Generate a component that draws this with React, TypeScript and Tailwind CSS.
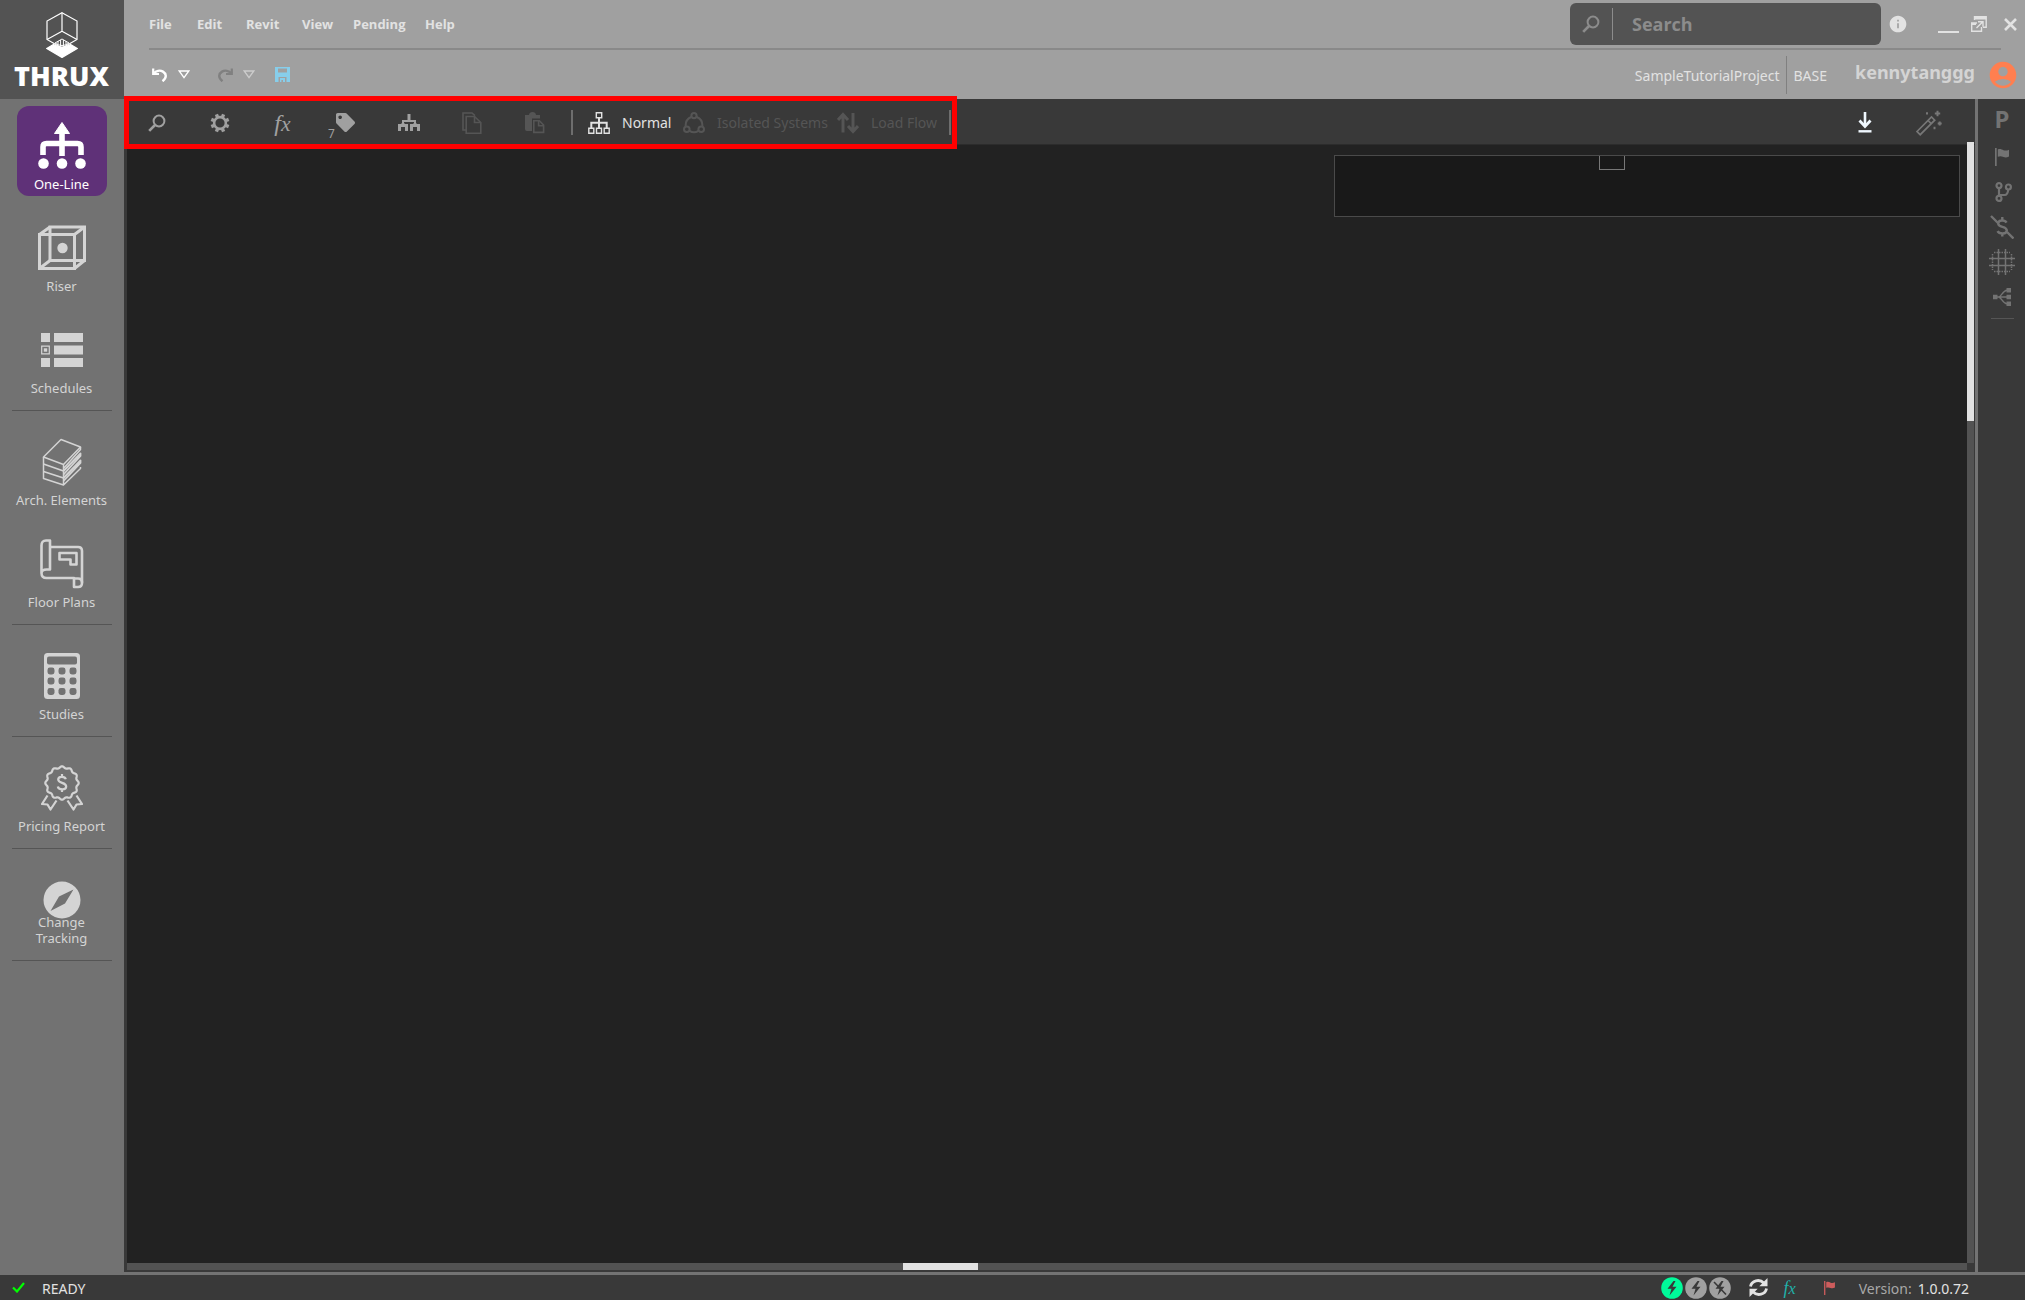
import React, { useState } from 'react';
import clsx from 'clsx';
import { MdAccountCircle, MdInfo } from 'react-icons/md';
import { FaTag } from 'react-icons/fa';

type IconProps = { className?: string };

const SearchIcon = ({ className }: IconProps) => (
  <svg viewBox="0 0 18 18" className={className} fill="none" stroke="currentColor">
    <circle cx="11" cy="7" r="5.4" strokeWidth="2" />
    <path d="M7 11L1.2 16.8" strokeWidth="2.6" />
  </svg>
);

const UndoIcon = ({ className }: IconProps) => (
  <svg viewBox="0 0 16 14" className={className} fill="none" stroke="currentColor" strokeWidth="2.2">
    <path d="M1.2 0.5V6h5.8" />
    <path d="M1.5 5.5C4 2.8 8 2 11 3.6c3 1.8 4.500 6-0.5 9.6" strokeWidth="2.4" />
  </svg>
);

const TriangleIcon = ({ className }: IconProps) => (
  <svg viewBox="0 0 12 9" className={className} fill="none" stroke="currentColor" strokeWidth="1.3">
    <path d="M1.2 1h9.6L6 7.6z" />
  </svg>
);

const SaveIcon = ({ className }: IconProps) => (
  <svg viewBox="0 0 15 15" className={className} fill="currentColor" fillRule="evenodd">
    <path d="M0 0h15v15h-3.5v-5h-8v5H0zM3 1.5v4h9v-4zM5 11h5v4H8v-2H6.4v2H5z" />
  </svg>
);

const GearIcon = ({ className }: IconProps) => (
  <svg viewBox="0 0 20 20" className={className} fill="none" stroke="currentColor">
    <circle cx="10" cy="10" r="5.9" strokeWidth="2.6" />
    {[0, 45, 90, 135, 180, 225, 270, 315].map((angle) => (
      <path key={angle} d="M10 4V0.6" strokeWidth="3.4" transform={`rotate(${angle + 22.5} 10 10)`} />
    ))}
  </svg>
);

const TreeIcon = ({ className }: IconProps) => (
  <svg viewBox="0 0 22 18" className={className} fill="none" stroke="currentColor">
    <path d="M11 0v8" strokeWidth="3" />
    <path d="M5 11V7h12v4" strokeWidth="2" />
    <path d="M1.5 17v-5.5h7V17M13.5 17v-5.5h7V17" strokeWidth="3" />
    <path d="M5 9v3M17 9v3" strokeWidth="3" />
  </svg>
);

const CopyIcon = ({ className }: IconProps) => (
  <svg viewBox="0 0 20 22" className={className} fill="none" stroke="currentColor" strokeWidth="1.6">
    <path d="M4.2 4.5h8.3l6.3 6v10.7H4.2z" />
    <path d="M12.5 4.5v6h6" />
    <path d="M4 18H1V1h9l3 2.6" />
  </svg>
);

const PasteIcon = ({ className }: IconProps) => (
  <svg viewBox="0 0 20 22" className={className} fill="currentColor">
    <path d="M0 3h4c0-4 7-4 7 0h4v3.4H7V19H2a2 2 0 0 1-2-2z" />
    <path d="M8.8 8.8h5.6l4.2 4.2v7.4H8.8z" fill="none" stroke="currentColor" strokeWidth="1.6" />
    <path d="M13.6 8.5v5.2h5.2" fill="none" stroke="currentColor" strokeWidth="1.6" />
  </svg>
);

const SitemapIcon = ({ className }: IconProps) => (
  <svg viewBox="0 0 22 22" className={className} fill="none" stroke="currentColor" strokeWidth="1.4">
    <path d="M8.3 0.8h5.4v5H8.3zM0.8 16.2h5v5h-5zM8.5 16.2h5v5h-5zM16.2 16.2h5v5h-5z" />
    <path d="M11 6v10M3.3 16v-5.2h15.4V16" strokeWidth="2" />
  </svg>
);

const IsolatedIcon = ({ className }: IconProps) => (
  <svg viewBox="0 0 22 22" className={className} fill="none" stroke="currentColor" strokeWidth="2">
    <circle cx="11" cy="3.6" r="2.6" />
    <circle cx="3.8" cy="17.2" r="2.8" />
    <circle cx="18.2" cy="17.2" r="2.8" />
    <path d="M8.2 5C4.6 6.5 2.4 10 2.6 14.2M13.8 5c3.6 1.5 5.8 5 5.6 9.2M6.6 18.8c2.6 1.6 6.2 1.6 8.8 0" />
  </svg>
);

const UpDownIcon = ({ className }: IconProps) => (
  <svg viewBox="0 0 22 22" className={className} fill="none" stroke="currentColor" strokeWidth="3">
    <path d="M6 20.5V3M1 8l5-5.5L11 8" />
    <path d="M16 1v17.5M11 14l5 5.5 5-5.5" />
  </svg>
);

const DownloadIcon = ({ className }: IconProps) => (
  <svg viewBox="0 0 14 21" className={className} fill="none" stroke="currentColor">
    <path d="M7 0v14" strokeWidth="2.6" />
    <path d="M1.5 8.500L7 14.5l5.5-6" strokeWidth="2.8" />
    <path d="M0.5 19.3h13" strokeWidth="2.4" />
  </svg>
);

const WandIcon = ({ className }: IconProps) => (
  <svg viewBox="0 0 26 26" className={className} fill="none" stroke="currentColor" strokeWidth="1.7">
    <path d="M1 21.5L15.5 7l3.2 3.2L4.2 24.7z" />
    <path d="M12 10.5l3.2 3.2" />
    <path d="M21.5 0.8v5.4M18.8 3.5h5.4" strokeWidth="2" />
    <path d="M23.7 11.5v4M21.7 13.5h4M18.5 16.8v2.4M11 2.2v2.4" strokeWidth="2" />
  </svg>
);

const FlagIcon = ({ className }: IconProps) => (
  <svg viewBox="0 0 14 18" className={className} fill="currentColor">
    <path d="M0 0h1.7v18H0zM2.8 1.5c2.2-1.2 4 0 5.7 0.7 1.6 0.6 3.5 0.5 5.5-0.5V8.5c-2 1-3.8 1.2-5.5 0.5-1.8-0.7-3.5-1.2-5.7-0.2z" />
  </svg>
);

const BranchIcon = ({ className }: IconProps) => (
  <svg viewBox="0 0 17 20" className={className} fill="none" stroke="currentColor" strokeWidth="2.2">
    <circle cx="4" cy="3.6" r="2.5" />
    <circle cx="13.4" cy="5" r="2.5" />
    <circle cx="4" cy="16.4" r="2.5" />
    <path d="M4 6v8M4 13h5.5c2.5 0 3.5-2 3.700-5.5" />
  </svg>
);

const NoCostIcon = ({ className }: IconProps) => (
  <svg viewBox="0 0 24 24" className={className} fill="none" stroke="currentColor" strokeWidth="2.4">
    <path d="M1 1l7.5 7.5M17 17l6.5 6.5" />
    <path d="M16.5 7.6C15 4.8 8.2 4.5 8.2 8.5c0 4.5 8.6 2.3 8.6 7 0 4-7.6 3.8-9.3 0.6M12.3 2v4M12.3 18v3.5" />
  </svg>
);

const GridGlobeIcon = ({ className }: IconProps) => (
  <svg viewBox="0 0 26 26" className={className} fill="none" stroke="currentColor" strokeWidth="1.5">
    <path d="M9.5 0v26M16.5 0v26M0 9.5h26M0 16.5h26" />
    <path d="M3.5 5v16M22.5 5v16M5 3.5h16M5 22.5h16" strokeDasharray="1.5 1" />
  </svg>
);

const FanOutIcon = ({ className }: IconProps) => (
  <svg viewBox="0 0 18 18" className={className} fill="currentColor">
    <path d="M0 6.8h4.5v4.5H0zM13.5 0H18v4.5h-4.5zM13.5 6.8H18v4.5h-4.5zM13.5 13.5H18V18h-4.5z" />
    <path d="M4 9h10M5.5 9c3 0 4-6.5 8.5-6.8M5.5 9c3 0 4 6.5 8.5 6.8" fill="none" stroke="currentColor" strokeWidth="1.4" />
  </svg>
);

const RefreshIcon = ({ className }: IconProps) => (
  <svg viewBox="0 0 19 19" className={className} fill="none" stroke="currentColor" strokeWidth="2.8">
    <path d="M1.5 8.5C2.5 2.5 10.5 0.5 14.8 5" />
    <path d="M17.5 10.5C16.5 16.5 8.5 18.5 4.2 14" />
    <path d="M18.5 0v8.2h-8.2zM0.5 19v-8.200h8.2z" fill="currentColor" stroke="none" />
  </svg>
);

const BoltIcon = ({ className, crossed }: IconProps & { crossed?: boolean }) => (
  <svg viewBox="0 0 22 22" className={className}>
    <circle cx="11" cy="11" r="10.8" fill="currentColor" />
    <path d="M12.5 4L6.5 11.8h4L8.5 18.5l7-8.8h-4L14.5 4z" fill="#393939" />
    {crossed && <path d="M5 5l12 12.5" stroke="#393939" strokeWidth="1.6" />}
  </svg>
);

const OneLineIcon = () => (
  <svg viewBox="0 0 48 48" className="size-12" fill="none" stroke="currentColor">
    <path d="M24 10v24M5 33v-8q0-3.5 3.5-3.5h31q3.5 0 3.5 3.5v8" strokeWidth="5.6" />
    <path d="M24 0.5l7.5 11h-15z" fill="currentColor" strokeLinejoin="round" />
    <g fill="currentColor" stroke="none">
      <circle cx="5.5" cy="41.5" r="5.3" />
      <circle cx="24" cy="41.5" r="5.3" />
      <circle cx="42.5" cy="41.5" r="5.3" />
    </g>
  </svg>
);

const RiserIcon = () => (
  <svg viewBox="0 0 48 46" className="h-[46px] w-12" fill="none" stroke="currentColor" strokeWidth="3">
    <path d="M1.5 9.5h35v34h-35z" />
    <path d="M12 2h34.5v33.5H12z" />
    <path d="M1.5 9.5L12 2M36.5 9.5l10-7.5M36.5 43.5l10-8M1.5 43.5l10.5-8" />
    <circle cx="24.5" cy="23" r="5.2" fill="currentColor" stroke="none" />
  </svg>
);

const SchedulesIcon = () => (
  <svg viewBox="0 0 42 34" className="h-[34px] w-[42px]" fill="currentColor">
    <path d="M0 0h9v9H0zM13 0h29v9H13zM13 12.5h29v9H13zM0 25h9v9H0zM13 25h29v9H13z" />
    <path d="M0.7 13.2h7.6v7.6H0.7z" fill="none" stroke="currentColor" strokeWidth="1.2" />
    <path d="M2.8 15.3h3.4v3.4H2.8z" />
  </svg>
);

const LayersIcon = () => (
  <svg viewBox="0 0 40 48" className="h-12 w-10" fill="none" stroke="currentColor" strokeWidth="1.5" strokeLinejoin="round">
    <path d="M19 1.5L38.5 9 21.5 26.5 1.5 19z" />
    <path d="M1.5 19v21.5L21.5 47V26.5M38.5 9v2.5L21.5 30.5M21.5 47l17-16.5V29" />
    <path d="M1.5 26l20 7M1.5 33.5l20 6.5M21.5 33l17-17.5v2.5L21.5 36.5M21.5 40l17-17.5v2.5L21.5 43" strokeWidth="1.8" />
  </svg>
);

const FloorPlanIcon = () => (
  <svg viewBox="0 0 44 50" className="h-[50px] w-11" fill="none" stroke="currentColor" strokeWidth="2.6" strokeLinejoin="round">
    <path d="M10 8h28q4 0 4 4v32q0 4-4 4h-4v-9H6.5Q1.5 39 1.5 34V6.5Q1.5 1.5 6 1.5h4v29H6.5q-5 0-5 4" />
    <path d="M34 39.5h4q4 0 4 4" />
    <path d="M19.5 14h17v11.5h-6v-5h-11z" />
  </svg>
);

const CalculatorIcon = () => (
  <svg viewBox="0 0 36 46" className="h-[46px] w-9" fill="currentColor">
    <rect width="36" height="46" rx="3.5" />
    <g fill="#727272">
      <rect x="3" y="3.5" width="30" height="8" rx="2" />
      {[14.5, 24.5, 35].map((y) =>
        [3.5, 14.5, 25.5].map((x) => <rect key={`${x}-${y}`} x={x} y={y} width="7" height="7" rx="2.4" />)
      )}
    </g>
  </svg>
);

// Scalloped outline of the rosette
const rosette = Array.from({ length: 145 }, (_, i) => {
  const a = (i / 144) * Math.PI * 2;
  const r = 15.8 + 0.9 * Math.cos(a * 12);
  return `${(21 + r * Math.sin(a)).toFixed(2)} ${(18 - r * Math.cos(a)).toFixed(2)}`;
}).join('L');

const RosetteIcon = () => (
  <svg viewBox="0 0 42 46" className="h-[46px] w-[42px]" fill="none" stroke="currentColor" strokeWidth="2.2" strokeLinejoin="round">
    <path d={`M${rosette}Z`} />
    <path d="M6.5 30.5L1 39l5.5 0.5L9.5 44.5l6-9M35.5 30.5L41 39l-5.5 0.5-3 5-6-9" />
    <path d="M24.8 14.3c-1-3.5-7.6-3.3-7.6 0.3 0 4.2 8 2.4 8 6.9 0 3.8-7.6 3.9-8.4 0M21 9v3M21 24v3" />
  </svg>
);

const CompassIcon = () => (
  <svg viewBox="0 0 38 38" className="size-[38px]" fill="currentColor" fillRule="evenodd">
    <path d="M19 0.5a18.5 18.5 0 1 0 0 37a18.5 18.5 0 1 0 0-37zM30.5 8.5L22 22.5 7.5 30l8.5-14.5z" />
  </svg>
);

const LogoMark = () => (
  <svg viewBox="0 0 32 46" className="h-[46px] w-8" fill="none" stroke="white" strokeWidth="1.2">
    <path d="M16 0.8L31 9v18.5L16 36 1 27.5V9z" />
    <path d="M16 0.8v18.5M16 19.3L1 27.5M16 19.3l15 8.2" />
    <path d="M16 45.5L0.8 36.5l6.7-4q8.5 5 17 0l6.7 4z" fill="white" />
    <path d="M16 27l7 4q-7 5-14 0z" strokeWidth="1" />
    <path d="M12 29v4.5M14.6 28v6M17.4 28v6M20 29v4.5" strokeWidth="1" />
  </svg>
);

const FxGlyph = ({ className }: IconProps) => (
  <span className={clsx("font-['Liberation_Serif',serif] italic", className)}>
    f<sub className="bottom-0 text-[0.9em]">x</sub>
  </span>
);

const menus = [
  { name: 'File', width: 'w-12' },
  { name: 'Edit', width: 'w-[49px]' },
  { name: 'Revit', width: 'w-14' },
  { name: 'View', width: 'w-[51px]' },
  { name: 'Pending', width: 'w-[72px]' },
  { name: 'Help', width: 'w-12' },
];

const navItems = [
  { name: 'One-Line', icon: <OneLineIcon /> },
  { name: 'Riser', icon: <RiserIcon /> },
  { name: 'Schedules', icon: <SchedulesIcon />, divider: true },
  { name: 'Arch. Elements', icon: <LayersIcon /> },
  { name: 'Floor Plans', icon: <FloorPlanIcon />, divider: true },
  { name: 'Studies', icon: <CalculatorIcon />, divider: true },
  { name: 'Pricing Report', icon: <RosetteIcon />, divider: true },
  { name: 'Change Tracking', icon: <CompassIcon />, divider: true, wrap: true },
];

const tools = [
  { name: 'Find', icon: <SearchIcon className="size-[18px]" /> },
  { name: 'Settings', icon: <GearIcon className="size-5" /> },
  { name: 'Formula', icon: <FxGlyph className="text-2xl leading-6" /> },
  { name: 'Tags', icon: <FaTag className="size-[19px]" />, count: 7 },
  { name: 'Distribution', icon: <TreeIcon className="h-[18px] w-[22px]" /> },
  { name: 'Copy', icon: <CopyIcon className="h-[22px] w-5" />, disabled: true },
  { name: 'Paste', icon: <PasteIcon className="h-[22px] w-5" />, disabled: true },
];

const modes = [
  { name: 'Normal', icon: <SitemapIcon className="size-[22px]" />, width: 'w-[95px]' },
  { name: 'Isolated Systems', icon: <IsolatedIcon className="size-[22px]" />, width: 'w-[154px]', disabled: true },
  { name: 'Load Flow', icon: <UpDownIcon className="size-[22px]" />, width: 'w-[112px]', disabled: true },
];

function Sidebar() {
  const [active, setActive] = useState('One-Line');

  return (
    <aside className="flex w-[124px] shrink-0 flex-col bg-[#727272]">
      <div className="flex h-[99px] flex-col items-center bg-[#535353] pt-3 pr-px">
        <LogoMark />
        <span className="mt-0.5 font-['Open_Sans',sans-serif] text-[27px] leading-8 font-extrabold text-white">THRUX</span>
      </div>
      <nav className="flex flex-col items-center pt-[7px] pr-px">
        {navItems.map((item) => (
          <React.Fragment key={item.name}>
            <button
              onClick={() => setActive(item.name)}
              className={clsx(
                'flex h-[90px] w-[90px] flex-col items-center rounded-xl pt-4 text-[13px] leading-4',
                active === item.name ? 'bg-[#5f3178] text-white' : 'text-[#d4d4d4]'
              )}
            >
              <span className="flex h-12 items-center justify-center">{item.icon}</span>
              <span className={item.wrap ? '-mt-2.5 w-16' : 'mt-1.5 whitespace-nowrap'}>{item.name}</span>
            </button>
            {item.divider ? <hr className="mt-2.5 mb-[11px] w-[100px] border-[#555555]" /> : <div className="h-3" />}
          </React.Fragment>
        ))}
      </nav>
    </aside>
  );
}

function Header() {
  return (
    <header className="flex h-[99px] flex-col bg-[#a0a0a0] text-[#e2e2e2]">
      <div className="flex h-12 items-center pr-2 pl-[25px]">
        <div className="flex pt-0.5 font-['Open_Sans',sans-serif] text-[13px] font-bold">
          {menus.map((menu) => (
            <button key={menu.name} className={clsx('text-left', menu.width)}>{menu.name}</button>
          ))}
        </div>
        <label className="ml-auto flex h-[42px] w-[311px] items-center rounded-md bg-[#535353] pl-3 text-[#8c8c8c]">
          <SearchIcon className="size-[18px] shrink-0" />
          <span className="ml-3 h-8 w-px bg-[#8c8c8c]" />
          <input
            type="text"
            aria-label="Search"
            placeholder="Search"
            className="ml-[19px] w-56 bg-transparent font-['Open_Sans',sans-serif] text-lg font-bold outline-none placeholder:text-[#8c8c8c]"
          />
        </label>
        <button aria-label="Info" className="ml-[7px]"><MdInfo className="size-5" /></button>
        <button aria-label="Minimize" className="ml-[30px] pt-4">
          <span className="block h-0.5 w-[21px] bg-[#e2e2e2]" />
        </button>
        <button aria-label="Restore" className="ml-3">
          <svg viewBox="0 0 16 16" className="size-4" fill="none" stroke="currentColor" strokeWidth="1.4">
            <path d="M3.5 4V0.8h11.7v10.4H12" />
            <path d="M3.5 2h11.7" strokeWidth="3" />
            <path d="M6 7H0.7v8.3h9.8V11" />
            <path d="M1 8h4" strokeWidth="2" />
            <path d="M5.5 12l5.8-5.8M7 5.7h5v5" />
          </svg>
        </button>
        <button aria-label="Close" className="ml-[17px]">
          <svg viewBox="0 0 13 13" className="size-[13px]" stroke="currentColor" strokeWidth="2.6">
            <path d="M1 1l11 11M12 1L1 12" />
          </svg>
        </button>
      </div>
      <div className="mr-6 ml-[25px] h-0.5 bg-[#898989]" />
      <div className="flex h-[49px] items-center pr-1.5 pl-7">
        <button aria-label="Undo" className="text-white"><UndoIcon className="h-3.5 w-4" /></button>
        <button aria-label="Undo history" className="ml-2.5 text-white"><TriangleIcon className="h-[9px] w-3" /></button>
        <button aria-label="Redo" className="ml-[27px] text-[#808080]"><UndoIcon className="h-3.5 w-4 -scale-x-100" /></button>
        <button aria-label="Redo history" className="ml-2.5 text-[#cccccc]"><TriangleIcon className="h-[9px] w-3" /></button>
        <button aria-label="Save" className="ml-5 text-[#87ceeb]"><SaveIcon className="size-[15px]" /></button>
        <span className="ml-auto pt-0.5 text-sm">SampleTutorialProject</span>
        <span className="ml-[7px] h-[38px] w-px bg-[#808080]" />
        <span className="ml-1.5 pt-0.5 text-sm">BASE</span>
        <span className="ml-7 pb-1.5 text-lg font-bold text-[#d4d4d4]">kennytanggg</span>
        <button aria-label="Account" className="ml-3 text-[#ff7f50]"><MdAccountCircle className="size-8" /></button>
      </div>
    </header>
  );
}

function Toolbar() {
  return (
    <div className="flex h-[46px] items-center border-b border-[#2c2c2c]">
      <div className="relative flex h-full w-[833px] items-center pt-0.5 pl-px">
        {tools.map((tool) => (
          <button
            key={tool.name}
            aria-label={tool.name}
            disabled={tool.disabled}
            className={clsx('relative flex w-[63px] items-center justify-center', tool.disabled ? 'text-[#555555]' : 'text-[#a0a0a0]')}
          >
            {tool.icon}
            {tool.count && <span className="absolute -bottom-2.5 left-3.5 text-xs leading-4">{tool.count}</span>}
          </button>
        ))}
        <span className="ml-[5px] h-[25px] w-0.5 bg-[#6e6e6e]" />
        <div className="ml-[15px] flex text-sm">
          {modes.map((mode) => (
            <button
              key={mode.name}
              disabled={mode.disabled}
              className={clsx('flex items-center gap-3 whitespace-nowrap', mode.width, mode.disabled ? 'text-[#555555]' : 'text-[#e2e2e2]')}
            >
              {mode.icon}
              {mode.name}
            </button>
          ))}
        </div>
        <span className="h-[25px] w-0.5 bg-[#6e6e6e]" />
        <div className="pointer-events-none absolute inset-x-0 -top-[3px] -bottom-[5px] z-10 border-[5px] border-[#ff0000]" />
      </div>
      <button aria-label="Download" className="ml-auto pt-0.5 text-[#f0f8ff]"><DownloadIcon className="h-[21px] w-3.5" /></button>
      <button aria-label="Auto layout" className="mr-[33px] ml-11 pt-0.5 text-[#777777]"><WandIcon className="size-[26px]" /></button>
    </div>
  );
}

function Canvas() {
  return (
    <div className="flex grow flex-col pr-px pb-0.5 pl-[3px]">
      <div className="flex grow">
        <main className="grow bg-[#222222] pt-2.5 pr-[7px]">
          <div className="ml-auto h-[62px] w-[626px] border border-[#4a4a4a] bg-[#191919]">
            <div className="ml-[264px] h-3.5 w-[26px] border border-t-0 border-[#777777]" />
          </div>
        </main>
        <div className="w-[7px] bg-[#535353]">
          <div className="-mt-[3px] h-[279px] bg-[#e2e2e2]" />
        </div>
      </div>
      <div className="mr-[7px] flex h-[7px] justify-center bg-[#535353]">
        <div className="mr-[213px] h-full w-[75px] bg-[#e2e2e2]" />
      </div>
    </div>
  );
}

function RightRail() {
  return (
    <aside className="flex w-[50px] shrink-0 flex-col items-center border-l-[3px] border-[#737373] pl-px text-[#737373]">
      <button className="mt-1 text-2xl leading-8 font-bold">P</button>
      <button aria-label="Flags" className="mt-[13px]"><FlagIcon className="h-[18px] w-3.5" /></button>
      <button aria-label="Branches" className="mt-4 pl-[3px]"><BranchIcon className="h-5 w-[17px]" /></button>
      <button aria-label="Hide costs" className="mt-[13px]"><NoCostIcon className="size-6" /></button>
      <button aria-label="Grid" className="mt-2.5"><GridGlobeIcon className="size-[26px]" /></button>
      <button aria-label="Connections" className="mt-[13px]"><FanOutIcon className="size-[18px]" /></button>
      <hr className="mt-3 w-[23px] border-[#555555]" />
    </aside>
  );
}

function StatusBar() {
  return (
    <footer className="flex h-[25px] items-center pr-14 pl-3 text-sm text-[#e2e2e2]">
      <svg viewBox="0 0 13 11" className="h-[11px] w-[13px]" fill="none" stroke="#00ff00" strokeWidth="2.2">
        <path d="M1 5.5l4 4L12 1" />
      </svg>
      <span className="ml-[17px] pt-0.5">READY</span>
      <div className="ml-auto flex items-center gap-0.5">
        <BoltIcon className="size-[22px] text-[#00fa9a]" />
        <BoltIcon className="size-[22px] text-[#a0a0a0]" />
        <BoltIcon className="size-[22px] text-[#a0a0a0]" crossed />
      </div>
      <button aria-label="Refresh" className="ml-[18px]"><RefreshIcon className="size-[19px]" /></button>
      <FxGlyph className="ml-4 text-lg leading-5 text-[#20b2aa]" />
      <FlagIcon className="ml-7 h-3.5 w-[11px] text-[#cd5c5c]" />
      <span className="ml-6 pt-0.5 text-[#a8a8a8]">Version:</span>
      <span className="ml-1.5 pt-0.5">1.0.0.72</span>
    </footer>
  );
}

export default function App() {
  return (
    <div className="flex min-h-screen flex-col bg-[#393939] font-['Noto_Sans',sans-serif]">
      <div className="flex grow">
        <Sidebar />
        <div className="flex grow flex-col">
          <Header />
          <div className="flex grow">
            <div className="flex grow flex-col">
              <Toolbar />
              <Canvas />
            </div>
            <RightRail />
          </div>
          <div className="h-[3px] bg-[#737373]" />
        </div>
      </div>
      <StatusBar />
    </div>
  );
}
